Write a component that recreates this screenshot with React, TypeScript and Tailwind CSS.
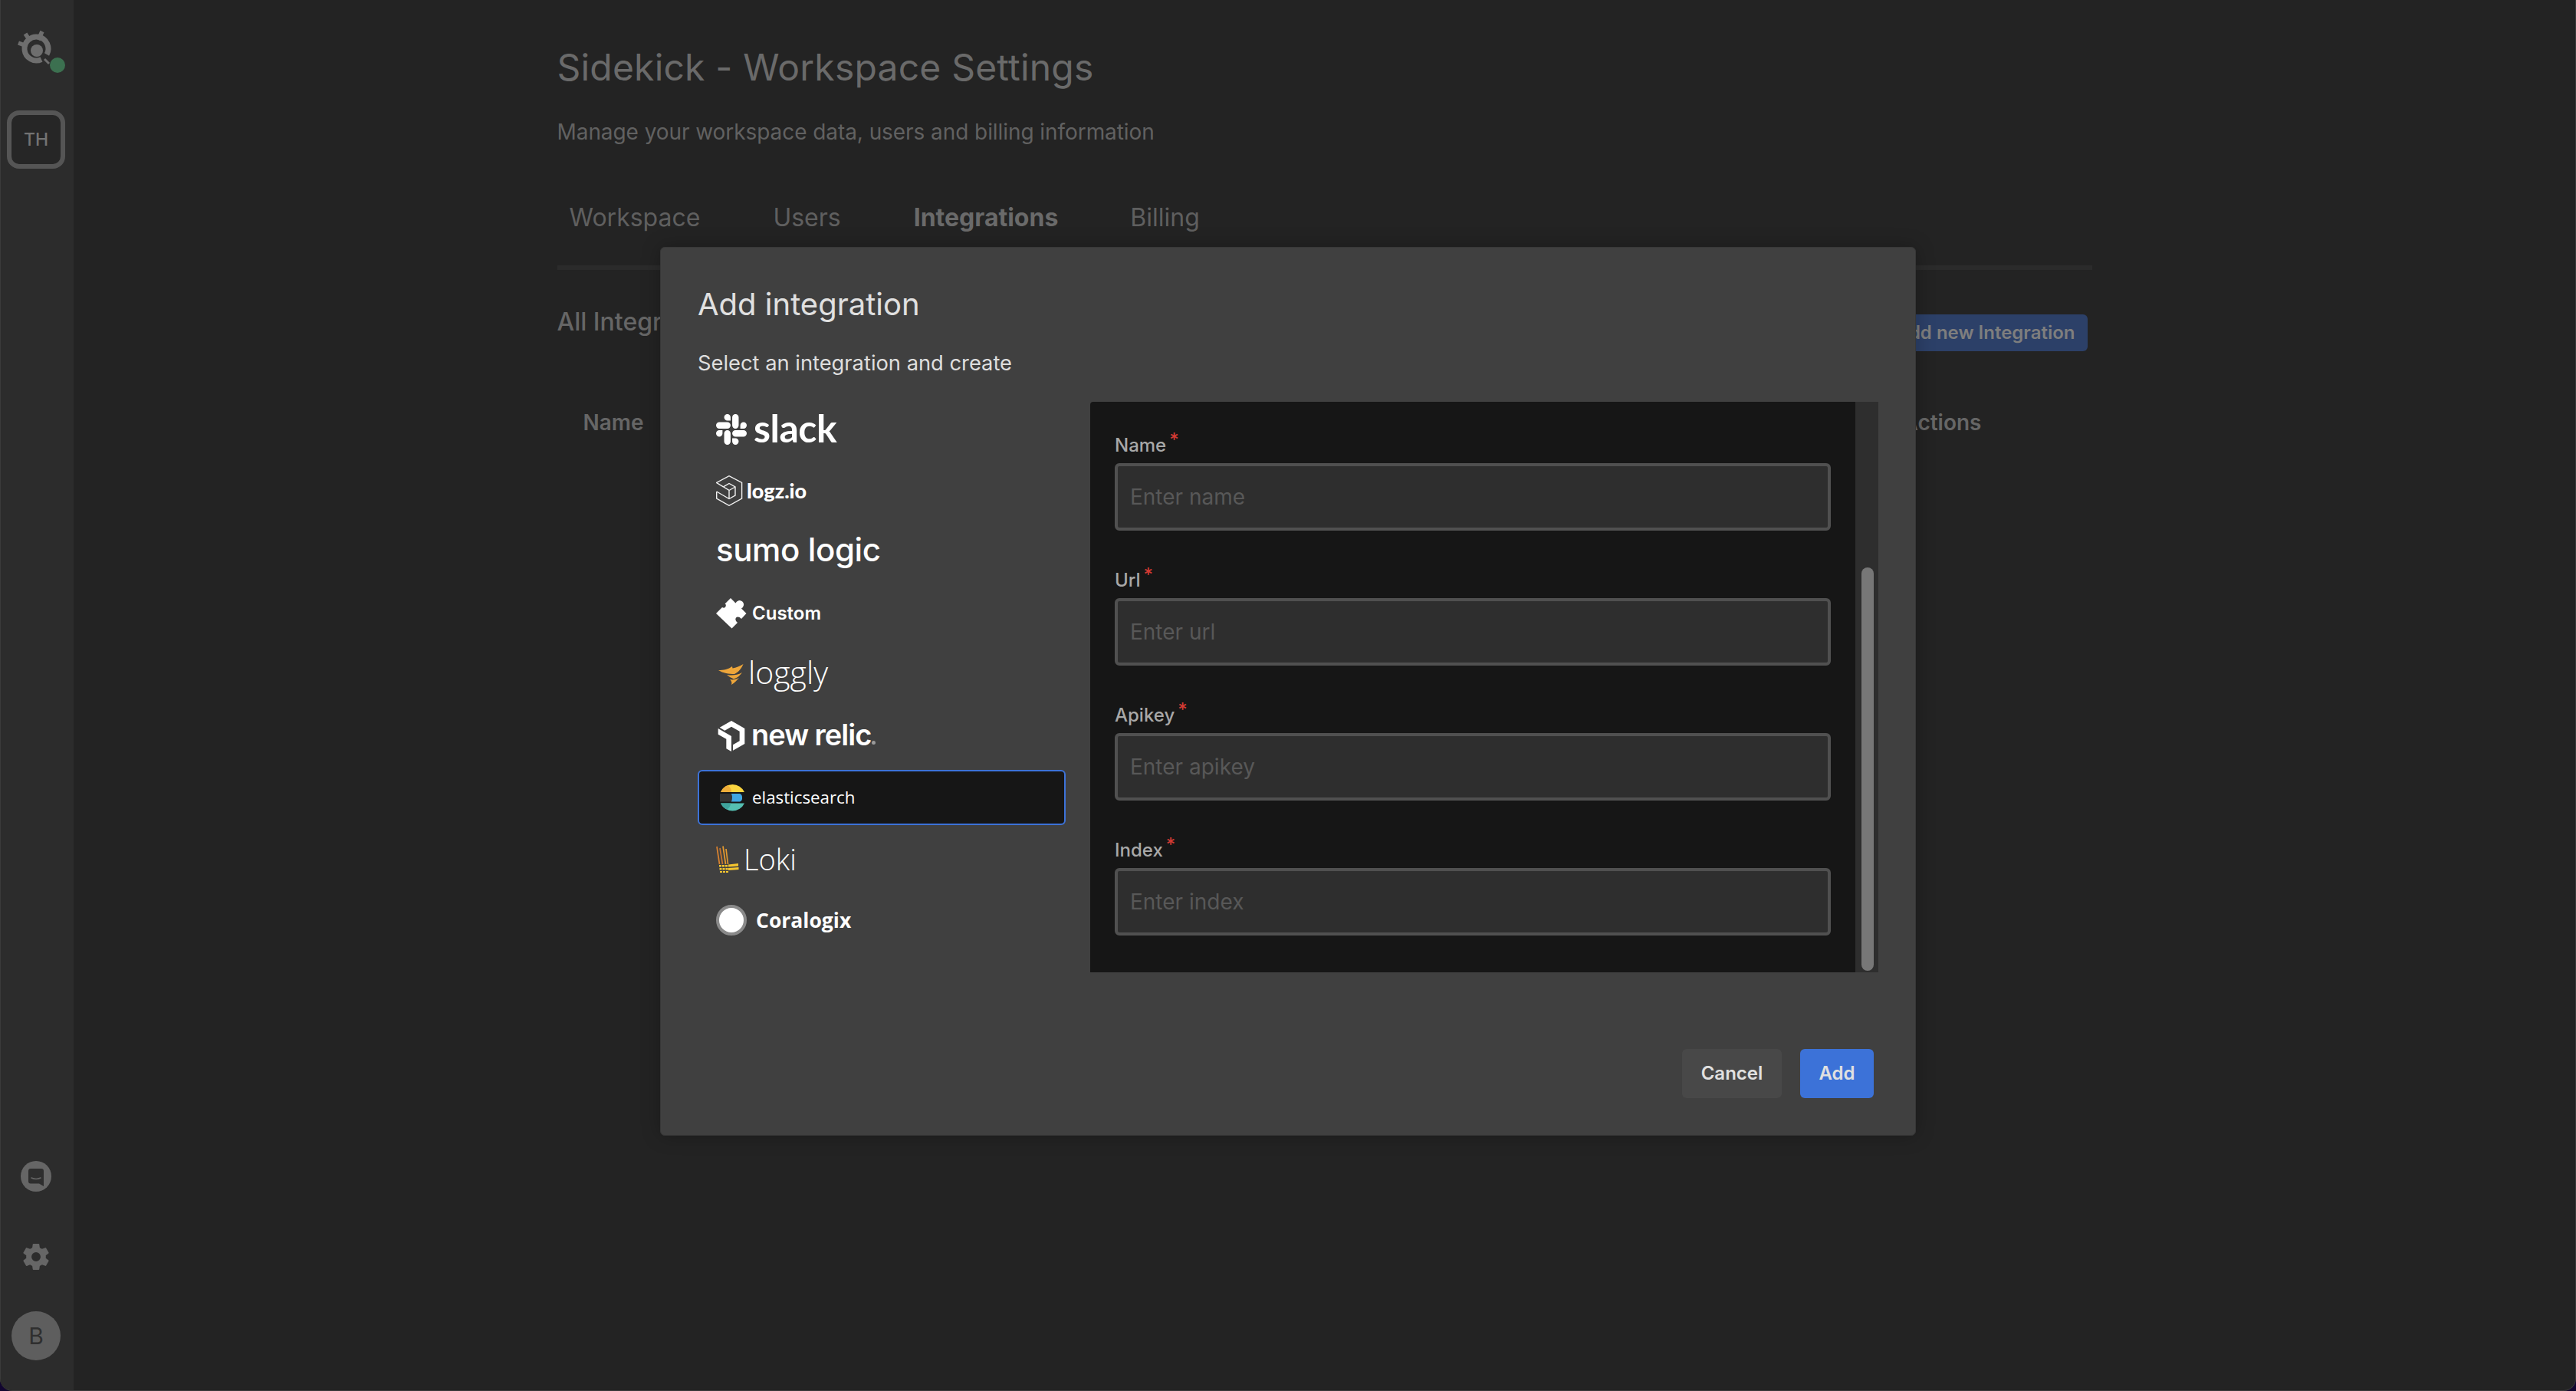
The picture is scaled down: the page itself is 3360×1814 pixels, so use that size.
import React from "react";
import { SiSlack, SiNewrelic } from "react-icons/si";
import { IoSettingsSharp } from "react-icons/io5";

const SidekickLogo = () => (
  <svg width="64" height="64" viewBox="0 0 64 64" className="block">
    <g fill="none" stroke="#6e6e6e">
      <path d="M39 44.500 A15.500 15.500 0 1 1 46 38" strokeWidth="7" />
      <path d="M35 19 L40 8 M24 20 L18 11 M20 27 L9 23" strokeWidth="5.500" />
      <path d="M43 44 L49 50" strokeWidth="3" />
    </g>
    <circle cx="33" cy="33" r="8" fill="#6e6e6e" />
  </svg>
);

const ChatIcon = () => (
  <svg width="40" height="40" viewBox="0 0 40 40" className="block">
    <circle cx="20" cy="20" r="20" fill="#666666" />
    <path d="M13 10 H27 A3 3 0 0 1 30 13 V33 L24 29.500 H13 A3 3 0 0 1 10 26.500 V13 A3 3 0 0 1 13 10 Z" fill="#2e2e2e" />
    <path d="M14 22 Q20 25 26 22" fill="none" stroke="#666666" strokeWidth="1.600" strokeLinecap="round" />
  </svg>
);

const LogzIcon = () => (
  <svg width="35" height="40" viewBox="0 0 35 40" className="block shrink-0">
    <g fill="none" stroke="#f0f0f0" strokeWidth="1.400">
      <path d="M0.700 21 V30 L17 39.300 L33.600 30 V9.500 L17 0.700 L0.700 9.500 L9.500 14.800" />
      <path d="M0.700 21 L17 30.500 L25 26 V15 L17 10.500 L9.500 14.800 L17 19.500 V30.500 M17 19.500 L25 15" />
    </g>
  </svg>
);

const PuzzleIcon = () => (
  <svg width="40" height="40" viewBox="0 0 40 40" className="block shrink-0">
    <path
      d="M0 20 L8 12 Q11 14 12.500 11 Q13.500 8 11.500 7.500 L19 0 L25.500 6.500 A5.500 5.500 0 1 1 33 13.500 L39.500 20 L33 27 Q29 23 26 25.500 Q24 29 28 32 L20.500 39.500 Z"
      fill="#ffffff"
    />
  </svg>
);

const LogglyIcon = () => (
  <svg width="33" height="27" viewBox="0 0 33 27" className="block shrink-0">
    <path d="M0 8 C7 8 13 7 18 3 L18.500 5.500 C23 4.500 28 3 32.500 0 C30.500 5 27 10 21 13 C14 13 6 12 0 8 Z" fill="#eea63a" />
    <path d="M11 14 C17 15 24 15 31 11 C28 15 25 18 20 19.500 C17 18 14 16.500 11 14 Z" fill="#eea63a" />
    <path d="M15 20 C19 21 23 20 27 18 C24 21 22 24 17 27 C18 24 17 22 15 20 Z" fill="#eea63a" />
  </svg>
);

const ElasticIcon = () => (
  <svg width="34" height="36" viewBox="0 0 34 36" className="block shrink-0">
    <path d="M1 11 A17 17 0 0 1 32 11 Z" fill="#fbd53f" />
    <path d="M1 11 A17 17 0 0 1 10 2 Q15.500 6 15 11 Z" fill="#efae3a" />
    <rect x="0" y="13" width="16" height="10.500" fill="#343434" />
    <path d="M15 13 H26 A4 5 0 0 1 29 18 A4 5 0 0 1 26 23.500 H15 Q17 18 15 13 Z" fill="#40a6e2" />
    <path d="M1 25.500 H32 A17 17 0 0 1 1 25.500 Z" fill="#55bfb2" />
    <path d="M1 25.500 H14 Q14 31 9 33.500 A17 17 0 0 1 1 25.500 Z" fill="#3fa39c" />
  </svg>
);

const LokiIcon = () => (
  <svg width="30" height="35" viewBox="0 0 30 35" className="block shrink-0">
    <g stroke="#d9822f" strokeWidth="1.700">
      <path d="M1 1 L4.500 24" />
      <path d="M5 3 L8.500 24" stroke="#c9772e" />
    </g>
    <g stroke="#e59a2e" strokeWidth="1.700">
      <path d="M9 0.500 L12.500 24" />
      <path d="M13 4 L15.500 24" />
    </g>
    <g fill="#f3c52f">
      <path d="M4 25 h3 v2.500 h-3z M8 25 h3 v2.500 h-3z M12 25 h3 v2.500 h-3z" />
      <path d="M4.500 29 h3 v2.500 h-3z M8.500 29 h3 v2.500 h-3z M12.500 29 h3 v2.500 h-3z" />
      <path d="M5 33 h3 v2 h-3z M9 33 h3 v2 h-3z M13 33 h3 v2 h-3z" />
      <path d="M16 24.500 L29 23 V26.500 L16 27.500 Z M16 29 L29.500 28 V31 L16 32 Z" />
    </g>
  </svg>
);

const Field = ({ label, placeholder }: { label: string; placeholder: string }) => (
  <div className="mb-[49px]">
    <div className="mb-[7px] flex h-[32px] items-center text-[24px] font-medium leading-[32px] text-[#a8a8a8]">
      <span>{label}</span>
      <span className="relative top-[-7px] ml-[4px] text-[24px] leading-[22px] text-[#d23a33]">*</span>
    </div>
    <input
      placeholder={placeholder}
      className="block h-[88px] w-full rounded-[6px] border-4 border-[#505050] bg-[#2e2e2e] px-[16px] text-[28px] text-[#d0d0d0] outline-none placeholder:text-[#585858]"
    />
  </div>
);

const Row = ({ children, selected }: { children: React.ReactNode; selected?: boolean }) => (
  <div
    className={
      selected
        ? "flex h-[72px] items-center rounded-[6px] border-2 border-[#3c72d8] bg-[#161616] pl-[27px]"
        : "flex h-[72px] items-center pl-[24px] text-white"
    }
  >
    {children}
  </div>
);

export default function App() {
  return (
    <div className="relative h-[1814px] w-[3360px] overflow-hidden bg-[#120630] font-['Inter',sans-serif]">
      <div className="flex h-full w-full overflow-hidden rounded-b-[16px] border-r border-b border-[#3a3a3a] bg-[#232323]">
        {/* Sidebar */}
        <aside className="flex h-full w-[96px] shrink-0 flex-col items-center border-l border-[#3a3a3a] bg-[#2c2c2c] pr-[3px]">
          <div className="relative mt-[33px] h-[64px] w-[64px]">
            <SidekickLogo />
            <span className="absolute left-[50px] top-[42px] h-[20px] w-[20px] rounded-full bg-[#3c7050]" />
          </div>
          <div className="mt-[47px] flex h-[76px] w-[76px] items-center justify-center rounded-[16px] border-[6px] border-[#555555] bg-[#262626] text-[23px] font-medium text-[#737373]">
            TH
          </div>
          <div className="mt-auto flex flex-col items-center">
            <ChatIcon />
            <div className="mt-[66px]">
              <IoSettingsSharp size={38} color="#666666" className="block" />
            </div>
            <div className="mt-[52px] mb-[39px] flex h-[64px] w-[64px] items-center justify-center rounded-full bg-[#5e5e5e] text-[30px] text-[#2f2f2f]">
              B
            </div>
          </div>
        </aside>

        {/* Page behind the dialog */}
        <main className="min-w-0 flex-1">
          <div className="mx-auto w-[2002px] pt-[56px]">
            <h1 className="text-[48px] leading-[64px] tracking-[0.2px] text-[#6a6a6a]">Sidekick - Workspace Settings</h1>
            <p className="mt-[32px] text-[28px] leading-[40px] tracking-[-0.07px] text-[#616161]">
              Manage your workspace data, users and billing information
            </p>
            <div className="mt-[68px] flex h-[92px] items-start border-b-[6px] border-[#2b2b2b] pl-[16px] text-[32px] leading-[48px] text-[#5f5f5f]">
              <span className="pr-[95px]">Workspace</span>
              <span className="pr-[95px]">Users</span>
              <span className="pr-[94px] font-bold text-[#6a6a6a]">Integrations</span>
              <span>Billing</span>
            </div>
            <div className="mt-[40px] flex items-start justify-between pr-[6px]">
              <span className="text-[32px] font-medium leading-[56px] text-[#666666]">All Integrations</span>
              <span className="mt-[18px] flex h-[48px] items-center rounded-[6px] bg-[#2c4068] px-[16px] text-[24px] font-semibold text-[#7e7e7e]">
                Add new Integration
              </span>
            </div>
            <div className="mt-[73px] flex justify-between pl-[34px] pr-[144px] text-[28px] font-semibold leading-[40px] text-[#666666]">
              <span>Name</span>
              <span>Actions</span>
            </div>
          </div>
        </main>
      </div>

      {/* Dialog */}
      <div className="absolute inset-0 flex justify-center pt-[322px]">
        <div className="h-[1159px] w-[1638px] rounded-[6px] border border-[#383838] bg-[#404040] pl-[48px] pr-[48px] shadow-[0_0_24px_rgba(0,0,0,0.25)]">
          <h2 className="mt-[50px] text-[40px] leading-[48px] text-[#e0e0e0]">Add integration</h2>
          <p className="mt-[33px] text-[27.3px] leading-[40px] text-[#dedede]">Select an integration and create</p>

          <div className="mt-[30px] flex h-[744px] gap-[32px]">
            <div className="flex w-[480px] shrink-0 flex-col gap-[8px]">
              <Row>
                <SiSlack size={40} color="#ffffff" className="shrink-0" />
                <span className="relative top-[-2px] ml-[9px] font-['Lato',sans-serif] text-[50px] font-bold leading-none tracking-[-0.5px]">slack</span>
              </Row>
              <Row>
                <LogzIcon />
                <span className="relative top-[-1px] ml-[5px] font-['Lato',sans-serif] text-[27px] font-black leading-none">logz.io</span>
              </Row>
              <Row>
                <span className="relative top-[-3px] font-['Inter',sans-serif] text-[42px] font-medium leading-none tracking-[-0.4px]">sumo logic</span>
              </Row>
              <Row>
                <PuzzleIcon />
                <span className="ml-[7px] text-[24px] font-semibold leading-none">Custom</span>
              </Row>
              <Row>
                <span className="relative top-[-1px] ml-[3px]"><LogglyIcon /></span>
                <span className="relative top-[-4px] ml-[6px] font-['Open_Sans',sans-serif] text-[41px] font-light leading-none">loggly</span>
              </Row>
              <Row>
                <SiNewrelic size={40} color="#ffffff" className="shrink-0" />
                <span className="relative top-[-2px] ml-[6px] font-['Inter',sans-serif] text-[38px] font-semibold leading-none tracking-[-1px]">new relic</span>
                <span className="relative top-[8px] ml-[1px] h-[5px] w-[5px] rounded-full bg-[#9a9a9a]" />
              </Row>
              <Row selected>
                <ElasticIcon />
                <span className="ml-[8px] font-['Open_Sans',sans-serif] text-[22.3px] leading-none text-white">elasticsearch</span>
              </Row>
              <Row>
                <LokiIcon />
                <span className="ml-[6px] font-['Open_Sans',sans-serif] text-[38px] font-light leading-none">Loki</span>
              </Row>
              <Row>
                <span className="h-[40px] w-[40px] shrink-0 rounded-full border-4 border-[#8a8a8a] bg-white" />
                <span className="ml-[12px] font-['Open_Sans',sans-serif] text-[26.5px] font-bold leading-none">Coralogix</span>
              </Row>
            </div>

            <div className="flex min-w-0 flex-1 overflow-hidden rounded-tl-[4px]">
              <div className="min-w-0 flex-1 bg-[#161616] px-[32px] pt-[41px]">
                <Field label="Name" placeholder="Enter name" />
                <Field label="Url" placeholder="Enter url" />
                <Field label="Apikey" placeholder="Enter apikey" />
                <Field label="Index" placeholder="Enter index" />
              </div>
              <div className="w-[30px] shrink-0 bg-[#2e2e2e] pl-[8px] pt-[216px]">
                <div className="h-[526px] w-[16px] rounded-full bg-[#777777]" />
              </div>
            </div>
          </div>

          <div className="mt-[100px] flex justify-end gap-[24px] pr-[6px]">
            <button className="h-[64px] w-[130px] rounded-[6px] bg-[#484848] text-[24px] font-semibold text-[#e0e0e0]">Cancel</button>
            <button className="h-[64px] w-[96px] rounded-[6px] bg-[#3c72d8] text-[24px] font-semibold text-[#e0e0e0]">Add</button>
          </div>
        </div>
      </div>
    </div>
  );
}
